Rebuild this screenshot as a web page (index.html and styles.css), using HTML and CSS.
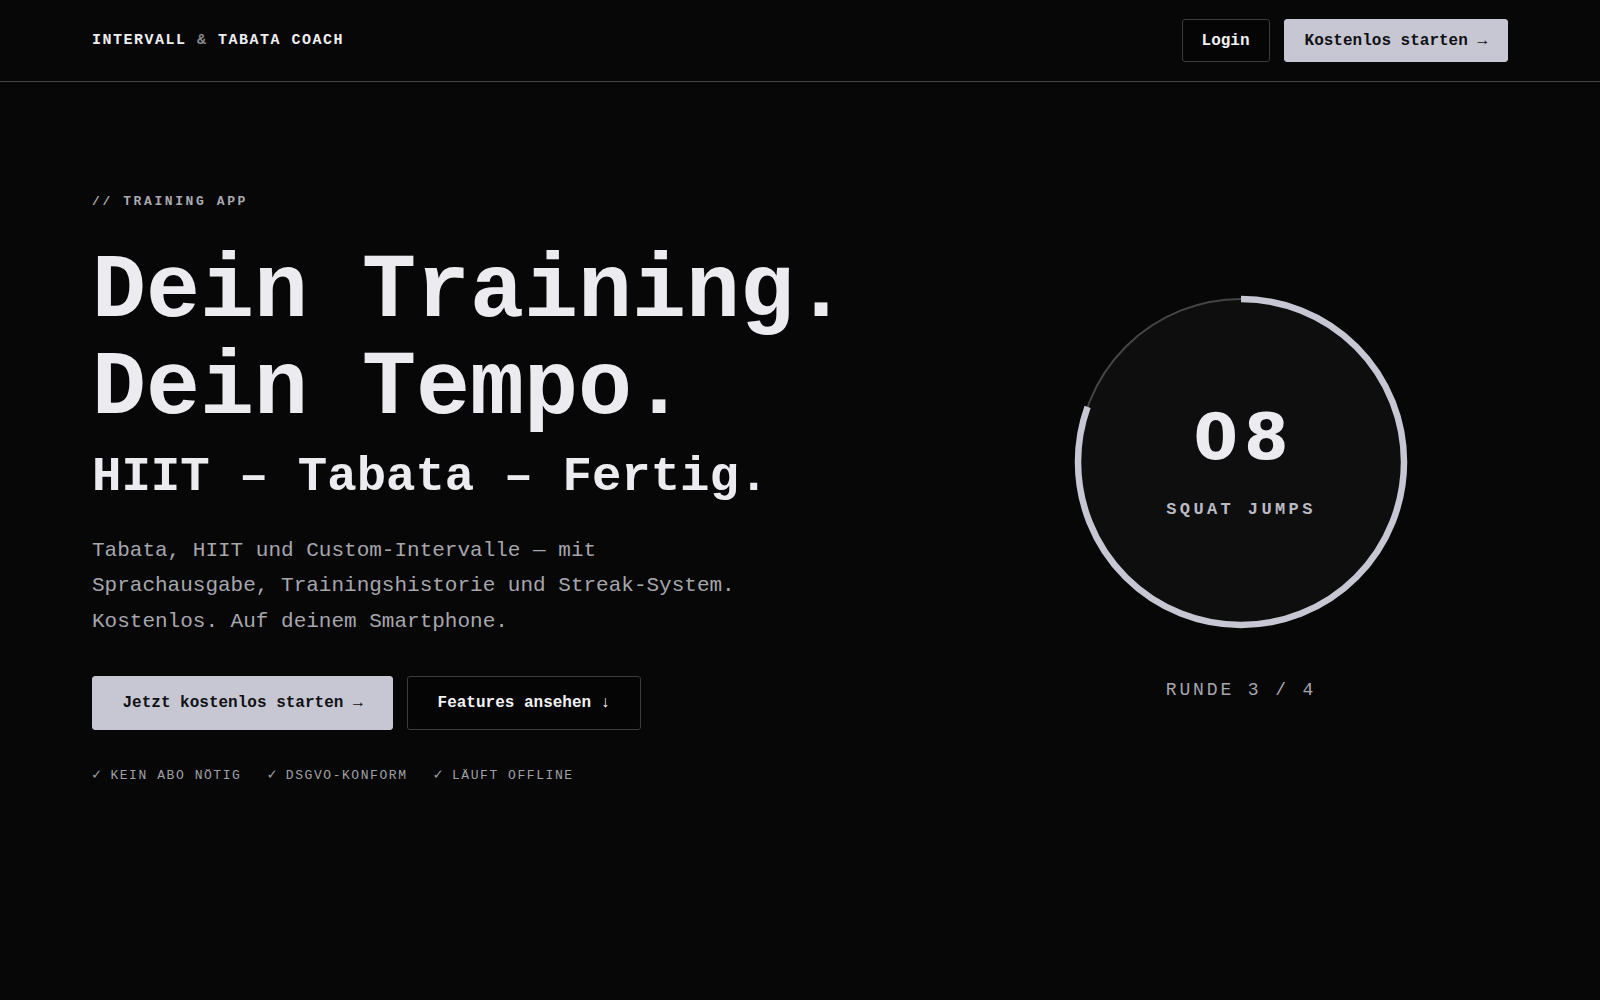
FILE: index.html
```html
<!DOCTYPE html>
<html lang="de">
<head>
    <meta charset="UTF-8">
    <meta name="viewport" content="width=device-width, initial-scale=1.0">
    <title>Intervall &amp; Tabata Coach</title>
    <link rel="stylesheet" href="styles.css">
</head>
<body>
    <header class="nav">
        <div class="nav-inner">
            <a class="logo" href="#">INTERVALL <span class="amp">&amp;</span> TABATA COACH</a>
            <div class="nav-actions">
                <a class="btn btn-ghost btn-sm" href="#">Login</a>
                <a class="btn btn-primary btn-sm" href="#">Kostenlos starten →</a>
            </div>
        </div>
    </header>

    <main class="hero">
        <div class="hero-text">
            <p class="eyebrow">// TRAINING APP</p>
            <h1>Dein Training.<br>Dein Tempo.</h1>
            <p class="tagline">HIIT – Tabata – Fertig.</p>
            <p class="lead">Tabata, HIIT und Custom-Intervalle — mit Sprachausgabe, Trainingshistorie und Streak-System. Kostenlos. Auf deinem Smartphone.</p>
            <div class="cta">
                <a class="btn btn-primary btn-lg" href="#">Jetzt kostenlos starten →</a>
                <a class="btn btn-ghost btn-lg" href="#features">Features ansehen ↓</a>
            </div>
            <ul class="checks">
                <li><span class="tick">✓</span> KEIN ABO NÖTIG</li>
                <li><span class="tick">✓</span> DSGVO-KONFORM</li>
                <li><span class="tick">✓</span> LÄUFT OFFLINE</li>
            </ul>
        </div>

        <div class="hero-timer">
            <div class="ring">
                <svg class="ring-svg" viewBox="0 0 340 340" width="340" height="340">
                    <!-- Hintergrund + Spur -->
                    <circle cx="170" cy="170" r="163" fill="#0e0e0f" stroke="#454547" stroke-width="2"/>
                    <!-- Fortschritt, startet oben -->
                    <circle cx="170" cy="170" r="163" fill="none" stroke="#c6c7d3" stroke-width="6.5"
                            stroke-dasharray="824 1100" transform="rotate(-90 170 170)"/>
                </svg>
                <div class="ring-content">
                    <span class="count">08</span>
                    <span class="exercise">SQUAT JUMPS</span>
                </div>
            </div>
            <p class="round">RUNDE 3 / 4</p>
        </div>
    </main>
</body>
</html>
```

FILE: styles.css
```css
body {
    font-family: "Courier New", Courier, "Liberation Mono", monospace;
    background-color: #070707;
    color: #e9e9ed;
    margin: 0;
    padding: 0;
    min-height: 100vh;
}

a {
    text-decoration: none;
    color: inherit;
}

/* Navigation */
.nav {
    border-bottom: 1px solid #444446;
}

.nav-inner {
    height: 81px;
    padding: 0 92px;
    display: flex;
    align-items: center;
    justify-content: space-between;
}

.logo {
    font-size: 15px;
    font-weight: bold;
    letter-spacing: 0.1em;
    color: #eeeef2;
}

.logo .amp {
    color: #8a8a90;
}

.nav-actions {
    display: flex;
    gap: 14px;
}

/* Buttons */
.btn {
    display: inline-block;
    font-weight: bold;
    border-radius: 3px;
    border: 1px solid transparent;
    line-height: 1.2;
}

.btn-sm {
    font-size: 16px;
    padding: 12px 20px 10px;
}

.btn-ghost.btn-sm {
    padding: 12px 19px 10px;
}

.btn-lg {
    font-size: 16px;
    padding: 17px 29.5px 16px;
}

.btn-primary {
    background-color: #c6c7d3;
    color: #111114;
    border-color: #c6c7d3;
}

.btn-ghost {
    background-color: #050505;
    color: #f2f2f5;
    border-color: #3c3c40;
}

/* Hero */
.hero {
    display: grid;
    grid-template-columns: 1fr 534px;
    align-items: start;
    padding: 110px 92px 80px;
}

.eyebrow {
    font-size: 13px;
    font-weight: bold;
    letter-spacing: 0.2em;
    color: #a9a9b1;
    margin: 0 0 32px;
    line-height: 1.5;
}

h1 {
    font-size: 90px;
    line-height: 1.08;
    font-weight: bold;
    margin: 0;
    color: #ececf0;
}

.tagline {
    font-size: 49px;
    font-weight: bold;
    line-height: 1.2;
    margin: 10px 0 26px;
    color: #ececf0;
}

.lead {
    font-size: 21px;
    line-height: 1.7;
    color: #a6a6ad;
    max-width: 660px;
    margin: 0 0 36px;
}

.cta {
    display: flex;
    gap: 14px;
}

.checks {
    list-style: none;
    display: flex;
    gap: 26px;
    padding: 0;
    margin: 35px 0 0;
    font-size: 13px;
    letter-spacing: 0.12em;
    color: #a0a0a6;
}

.tick {
    font-size: 15px;
    letter-spacing: 0;
}

/* Timer */
.hero-timer {
    display: flex;
    flex-direction: column;
    align-items: center;
    padding-top: 100px;
}

.ring {
    position: relative;
    width: 340px;
    height: 340px;
}

.ring-svg {
    display: block;
}

.ring-content {
    position: absolute;
    inset: 0;
    display: flex;
    flex-direction: column;
    align-items: center;
    justify-content: center;
}

.count {
    font-family: "DejaVu Sans", sans-serif;
    font-weight: bold;
    font-size: 64px;
    letter-spacing: 6px;
    padding-left: 6px;
    line-height: 1;
    color: #ececf0;
    margin-top: 0;
}

.exercise {
    font-size: 17px;
    font-weight: bold;
    letter-spacing: 0.2em;
    color: #babac2;
    margin-top: 31px;
}

.round {
    font-size: 18px;
    letter-spacing: 0.16em;
    color: #a6a6ad;
    margin: 48px 0 0;
}
```
